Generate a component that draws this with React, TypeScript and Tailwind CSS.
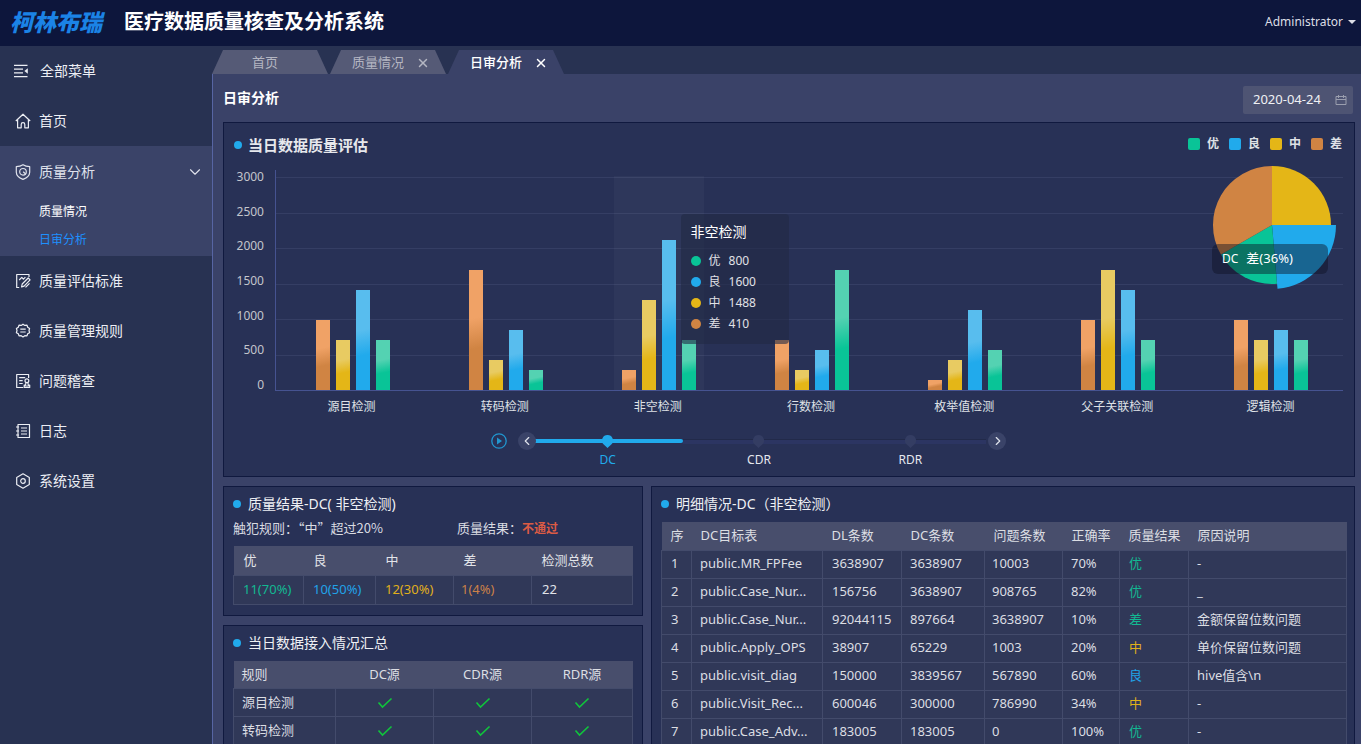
import type { ReactNode } from 'react';
import { ChevronDown, ChevronLeft, ChevronRight, X } from 'lucide-react';

type Grade = '优' | '良' | '中' | '差';

const gradeText: Record<Grade, string> = {
  优: 'text-[#12b892]',
  良: 'text-[#21a3e8]',
  中: 'text-[#e0b01c]',
  差: 'text-[#cc8148]',
};

const gradeFill: Record<Grade, string> = {
  优: 'bg-[#09c497]',
  良: 'bg-[#21aaec]',
  中: 'bg-[#e4b617]',
  差: 'bg-[#d08443]',
};

const grades: Grade[] = ['优', '良', '中', '差'];

// order of the bars inside one group: 差, 中, 良, 优
const barFills = [
  'bg-[linear-gradient(168deg,#f0a266_40%,#d08443_65%)]',
  'bg-[linear-gradient(168deg,#e8cb62_40%,#e4b617_65%)]',
  'bg-[linear-gradient(168deg,#58bdee_40%,#21aaec_65%)]',
  'bg-[linear-gradient(168deg,#54d2b2_40%,#09c497_65%)]',
];

const chartGroups = [
  { name: '源目检测', bars: [70, 50, 100, 50] },
  { name: '转码检测', bars: [120, 30, 60, 20] },
  { name: '非空检测', bars: [20, 90, 150, 50] },
  { name: '行数检测', bars: [50, 20, 40, 120] },
  { name: '枚举值检测', bars: [10, 30, 80, 40] },
  { name: '父子关联检测', bars: [70, 120, 100, 50] },
  { name: '逻辑检测', bars: [70, 50, 60, 50] },
];

const tooltipRows: [Grade, number][] = [
  ['优', 800],
  ['良', 1600],
  ['中', 1488],
  ['差', 410],
];

const detailHead = ['序', 'DC目标表', 'DL条数', 'DC条数', '问题条数', '正确率', '质量结果', '原因说明'];

const detailRows = [
  { table: 'public.MR_FPFee', dl: '3638907', dc: '3638907', bad: '10003', rate: '70%', grade: '优', color: 'text-[#12b892]', note: '-' },
  { table: 'public.Case_Nur...', dl: '156756', dc: '3638907', bad: '908765', rate: '82%', grade: '优', color: 'text-[#12b892]', note: '_' },
  { table: 'public.Case_Nur...', dl: '92044115', dc: '897664', bad: '3638907', rate: '10%', grade: '差', color: 'text-[#12b892]', note: '金额保留位数问题' },
  { table: 'public.Apply_OPS', dl: '38907', dc: '65229', bad: '1003', rate: '20%', grade: '中', color: 'text-[#e0b01c]', note: '单价保留位数问题' },
  { table: 'public.visit_diag', dl: '150000', dc: '3839567', bad: '567890', rate: '60%', grade: '良', color: 'text-[#21a3e8]', note: 'hive值含\\n' },
  { table: 'public.Visit_Rec...', dl: '600046', dc: '300000', bad: '786990', rate: '34%', grade: '中', color: 'text-[#e0b01c]', note: '-' },
  { table: 'public.Case_Adv...', dl: '183005', dc: '183005', bad: '0', rate: '100%', grade: '优', color: 'text-[#12b892]', note: '-' },
];

const Icon = ({ children }: { children: ReactNode }) => (
  <svg className="size-4 shrink-0" viewBox="0 0 16 16" fill="none" stroke="currentColor" strokeWidth={1.2} strokeLinejoin="round">
    {children}
  </svg>
);

const MenuIcon = () => (
  <Icon>
    <path d="M1 2.3h13.5M1 6.2h9M1 9.8h9M1 13.7h13.5" />
    <path d="M14.8 5.2v5.6L11.4 8z" fill="currentColor" stroke="none" />
  </Icon>
);

const HomeIcon = () => (
  <Icon>
    <path d="M.8 8 8 1.2 15.2 8M2.6 6.8v8h3.6v-3.4a1.8 1.8 0 0 1 3.6 0v3.4h3.6v-8" />
  </Icon>
);

const ShieldIcon = () => (
  <Icon>
    <path d="M8 .7c2 1.200 4.300 1.800 6.700 2v5.500c0 3.200-2.700 5.500-6.700 7.200-4-1.700-6.700-4-6.700-7.200V2.700C3.700 2.500 6 1.900 8 .7z" />
    <circle cx="8" cy="7.800" r="3.300" />
    <path d="M8.200 7.800 10.600 10" />
  </Icon>
);

const EditIcon = () => (
  <Icon>
    <path d="M14 4V1.500H1.700v13h2.500M4.200 7l2.600-2.600 1.600 1.800 2-2" />
    <path d="m6.600 14 .6-3 6-6 1.900 1.900-6 6.200zM10.500 14.300l4-4" />
  </Icon>
);

const RuleIcon = () => (
  <Icon>
    <path d="M8 1.200 9.800 2.400l2.200-.2.700 2 1.900 1.200L14 7.500l.6 2.200-1.900 1.100-.7 2-2.200-.1L8 14l-1.800-1.300-2.200.1-.7-2-1.900-1.100L2 7.500l-.6-2.100 1.900-1.200.7-2 2.200.2z" />
    <path d="M5.300 6.200h5.400M5.300 9h5.400" />
  </Icon>
);

const AuditIcon = () => (
  <Icon>
    <path d="M13.600 5V1.500H1.700v13h6.500M4.200 4.700h6M4.200 7.600h3.500M4.200 10.500h3.500" />
    <circle cx="11.900" cy="7.800" r="1.900" />
    <path d="M11 9.600 10.500 12H9.200v2.500h5.500V12h-1.400l-.5-2.400M9.200 13h5.500" />
  </Icon>
);

const LogIcon = () => (
  <Icon>
    <path d="M3 1.500h11.500v13H3zM1 4h3M1 8h3M1 12h3M6 5h6M6 8h6M6 11h6" />
  </Icon>
);

const SettingIcon = () => (
  <Icon>
    <path d="m8 .8 6.300 3.600v7.200L8 15.200l-6.300-3.600V4.400z" />
    <circle cx="8" cy="8" r="2.300" />
  </Icon>
);

const CalendarIcon = () => (
  <svg className="size-3 shrink-0 text-[#9a9eae]" viewBox="0 0 12 12" fill="none" stroke="currentColor">
    <path d="M1 2.500h10v8H1zM1 5.500h10M3.500 1v3M8.500 1v3" />
  </svg>
);

const Check = () => (
  <svg className="mx-auto h-3 w-4" viewBox="0 0 16 12" fill="none" stroke="#10c43c" strokeWidth={1.6}>
    <path d="m1.500 5.500 4 4.500 9-8.500" />
  </svg>
);

const NavItem = ({ icon, label }: { icon: ReactNode; label: string }) => (
  <a href="#" className="flex h-[50px] items-center gap-2 pl-[15px] text-sm text-[#eceef4]">
    {icon}
    {label}
  </a>
);

const Sidebar = () => (
  <nav className="w-[212px] shrink-0 bg-[#283252]">
    <a href="#" className="flex h-[50px] items-center gap-[11px] pl-[13px] text-sm text-[#eceef4]">
      <MenuIcon />
      全部菜单
    </a>
    <NavItem icon={<HomeIcon />} label="首页" />
    <div className="bg-[#3a4368] pb-[2px]">
      <button className="flex h-[52px] w-full items-center gap-2 pr-3 pl-[15px] text-sm text-[#dfe2ec]">
        <ShieldIcon />
        质量分析
        <ChevronDown className="ml-auto -mr-1 size-[18px]" strokeWidth={1.5} />
      </button>
      <a href="#" className="flex h-7 items-center pl-[39px] text-xs text-white">质量情况</a>
      <a href="#" className="flex h-7 items-center pl-[39px] text-xs text-[#1e90ff]">日审分析</a>
    </div>
    <NavItem icon={<EditIcon />} label="质量评估标准" />
    <NavItem icon={<RuleIcon />} label="质量管理规则" />
    <NavItem icon={<AuditIcon />} label="问题稽查" />
    <NavItem icon={<LogIcon />} label="日志" />
    <NavItem icon={<SettingIcon />} label="系统设置" />
  </nav>
);

const Tab = ({ label, active, closable }: { label: string; active?: boolean; closable?: boolean }) => (
  <div
    className={`flex h-6 w-[116px] items-center pt-[2px] text-[13px] [clip-path:polygon(11px_0,calc(100%-11px)_0,100%_100%,0_100%)] ${
      active ? 'bg-[#3a4268] font-medium text-white' : 'bg-[#555a76] text-[#b4b6c2]'
    } ${closable ? 'justify-between pr-4 pl-[22px]' : 'justify-center pr-[10px]'}`}
  >
    <a href="#">{label}</a>
    {closable && (
      <button aria-label={`关闭${label}`}>
        <X className="size-[14px]" strokeWidth={2.5} />
      </button>
    )}
  </div>
);

const Panel = ({ children }: { children: ReactNode }) => (
  <section className="border border-[#10193f] bg-[#283156]">{children}</section>
);

const PanelTitle = ({ children }: { children: ReactNode }) => (
  <h2 className="flex h-[34px] items-center gap-[7px] text-sm text-[#eef0f4]">
    <span className="size-2 rounded-full bg-[#21aaec]" />
    {children}
  </h2>
);

const ChartTooltip = () => (
  <div className="absolute top-[44px] left-1/2 z-10 ml-[22px] h-[130px] w-[108px] rounded bg-[#222944]/60 px-[10px] pt-2 text-white">
    <p className="mb-2 text-sm">非空检测</p>
    {tooltipRows.map(([grade, value]) => (
      <p key={grade} className="flex h-[21px] items-center text-xs text-[#e0e1e6]">
        <span className={`mr-2 size-[10px] rounded-full ${gradeFill[grade]}`} />
        <span className="mr-2">{grade}</span>
        <span>{value}</span>
      </p>
    ))}
  </div>
);

const Pie = () => (
  <div className="absolute -top-[5px] right-[6px]">
    <svg className="h-[125px] w-[125px]" viewBox="0 0 125 125">
      <path d="M60 60V1a59 59 0 0 1 59 59z" fill="#e4b617" />
      <path d="M60 60h64a64 64 0 0 1-58.500 63.800z" fill="#21aaec" />
      <path d="M60 60l5 58.800A59 59 0 0 1 8.900 89.500z" fill="#09c497" />
      <path d="M60 60 8.900 89.500A59 59 0 0 1 60 1z" fill="#d08443" />
    </svg>
    <p className="absolute top-[79px] left-0 flex h-[30px] w-[116px] items-center gap-2 rounded-md bg-[#0d1223]/45 px-[10px] text-xs text-white">
      <span>DC</span>
      <span className="text-[13px]">差(36%)</span>
    </p>
  </div>
);

const steps = ['DC', 'CDR', 'RDR'];

const Stepper = () => (
  <div className="flex items-start pt-[15px] pr-[348px] pb-2 pl-[267px]">
    <button aria-label="播放" className="mt-px mr-[11px] text-[#2196cf]">
      <svg className="size-4" viewBox="0 0 16 16" fill="none" stroke="currentColor" strokeWidth={1.300}>
        <circle cx="8" cy="8" r="7.200" />
        <path d="M6 4.500v7L11 8z" fill="currentColor" stroke="none" />
      </svg>
    </button>
    <button aria-label="上一个" className="z-10 -mr-1 flex size-[18px] items-center justify-center rounded-full bg-[#3a4368] text-[#dfe2ec]">
      <ChevronLeft className="-ml-px size-[14px]" />
    </button>
    <div className="grid flex-1 grid-cols-3">
      {steps.map((step, i) => (
        <button key={step} className={`relative flex flex-col items-center text-xs ${i === 0 ? 'text-[#21aaec]' : 'text-[#e6e8ee]'}`}>
          <span className={`absolute inset-x-0 top-[7px] ${i === 0 ? 'h-1 rounded-r-full bg-[#21aaec]' : 'h-[5px] border-t border-[#222a4a] bg-[#2c3562]'}`} />
          <svg className={`relative mt-[3px] h-[13px] w-[11px] ${i === 0 ? 'text-[#21aaec]' : 'text-[#343d63]'}`} viewBox="0 0 11 13" fill="currentColor">
            <path d="M5.500 0A5.500 5.500 0 0 1 9.800 9L5.500 13 1.200 9A5.500 5.500 0 0 1 5.500 0z" />
          </svg>
          <span className="mt-1 leading-4">{step}</span>
        </button>
      ))}
    </div>
    <button aria-label="下一个" className="ml-[2px] flex size-[18px] items-center justify-center rounded-full bg-[#3a4368] text-[#dfe2ec]">
      <ChevronRight className="ml-px size-[14px]" />
    </button>
  </div>
);

const AssessmentPanel = () => (
  <Panel>
    <div className="flex h-[46px] items-center justify-between pr-3 pb-[2px] pl-[10px]">
      <h2 className="flex items-center gap-[6px] text-[15px] font-bold text-[#e6e8ec]">
        <span className="size-2 rounded-full bg-[#21aaec]" />
        当日数据质量评估
      </h2>
      <ul className="flex gap-[10px] pb-[2px] text-xs font-bold text-[#dfe1e6]">
        {grades.map((grade) => (
          <li key={grade} className="flex items-center gap-[7px]">
            <span className={`size-3 rounded-xs ${gradeFill[grade]}`} />
            {grade}
          </li>
        ))}
      </ul>
    </div>

    <div className="flex pr-[11px]">
      <div className="flex h-[224px] w-[51px] flex-col justify-between pr-[11px] text-right text-xs leading-4 text-[#c3c5cc]">
        {[3000, 2500, 2000, 1500, 1000, 500, 0].map((tick) => (
          <span key={tick}>{tick}</span>
        ))}
      </div>
      <div className="min-w-0 flex-1 pt-px">
        <div className="relative h-[221px] border-b border-l border-[#465391]">
          <div className="absolute inset-x-0 top-[7px] bottom-0 flex flex-col">
            {[3000, 2500, 2000, 1500, 1000, 500].map((tick) => (
              <div key={tick} className="flex-1 border-t border-[#353e64]" />
            ))}
          </div>
          <div className="relative -mr-1 flex h-full">
            {chartGroups.map(({ name, bars }, i) => (
              <div key={name} className="relative flex flex-1 items-end justify-center gap-[6px]">
                {i === 2 && <div className="absolute top-[6px] bottom-0 left-1/2 w-[90px] -translate-x-1/2 bg-white/3" />}
                {bars.map((height, b) => (
                  <div key={b} className={`relative w-[14px] ${barFills[b]}`} style={{ height }} />
                ))}
                {i === 2 && <ChartTooltip />}
              </div>
            ))}
          </div>
          <Pie />
        </div>
        <div className="-mr-1 flex">
          {chartGroups.map(({ name }) => (
            <span key={name} className="flex-1 pt-[6px] text-center text-xs leading-5 text-[#dfe1e6]">{name}</span>
          ))}
        </div>
      </div>
    </div>

    <Stepper />
  </Panel>
);

const cell = 'border border-[#434b6b] font-normal';

const ResultPanel = () => (
  <Panel>
    <div className="px-[9px] pb-[10px]">
      <PanelTitle>质量结果-DC( 非空检测)</PanelTitle>
      <div className="-mt-[2px] mb-[9px] flex font-['Noto_Sans_CJK_SC',sans-serif] text-[13px] leading-[18px] text-[#d9dbe1]">
        <p className="w-[56%]">触犯规则：“中”超过20%</p>
        <p>
          质量结果：<strong className="text-xs text-[#dc5b44]">不通过</strong>
        </p>
      </div>
      <table className="w-full table-fixed border-collapse text-left text-[13px] text-[#e2e4e9]">
        <colgroup>
          <col className="w-[70px]" />
          <col className="w-[72px]" />
          <col className="w-[78px]" />
          <col className="w-[78px]" />
          <col />
        </colgroup>
        <thead className="bg-[#484e6c]">
          <tr className="h-[29px]">
            {['优', '良', '中', '差', '检测总数'].map((head) => (
              <th key={head} className="pl-[10px] font-normal">{head}</th>
            ))}
          </tr>
        </thead>
        <tbody className="bg-[#303858]">
          <tr className="h-[29px]">
            <td className={`${cell} pl-[9px] ${gradeText['优']}`}>11(70%)</td>
            <td className={`${cell} pl-[9px] ${gradeText['良']}`}>10(50%)</td>
            <td className={`${cell} pl-[9px] ${gradeText['中']}`}>12(30%)</td>
            <td className={`${cell} pl-[7px] ${gradeText['差']}`}>1(4%)</td>
            <td className={`${cell} pl-[10px]`}>22</td>
          </tr>
        </tbody>
      </table>
    </div>
  </Panel>
);

const SummaryPanel = () => (
  <Panel>
    <div className="px-[9px] pb-3">
      <PanelTitle>当日数据接入情况汇总</PanelTitle>
      <table className="mt-px w-full table-fixed border-collapse text-center text-[13px] text-[#dcdee3]">
        <colgroup>
          <col className="w-[102px]" />
          <col className="w-[98px]" />
          <col className="w-[98px]" />
          <col />
        </colgroup>
        <thead className="bg-[#484e6c]">
          <tr className="h-7">
            <th className="pl-2 text-left font-normal">规则</th>
            <th className="font-normal">DC源</th>
            <th className="font-normal">CDR源</th>
            <th className="font-normal">RDR源</th>
          </tr>
        </thead>
        <tbody className="bg-[#303858]">
          {['源目检测', '转码检测'].map((rule) => (
            <tr key={rule} className="h-7">
              <th className={`${cell} pl-2 text-left`}>{rule}</th>
              <td className={cell}><Check /></td>
              <td className={cell}><Check /></td>
              <td className={cell}><Check /></td>
            </tr>
          ))}
        </tbody>
      </table>
    </div>
  </Panel>
);

const DetailPanel = () => (
  <Panel>
    <div className="pr-[7px] pb-3 pl-[9px]">
      <PanelTitle>明细情况-DC（非空检测）</PanelTitle>
      <table className="mt-px w-full table-fixed border-collapse text-left text-[13px] text-[#dcdee3]">
        <colgroup>
          <col className="w-[30px]" />
          <col className="w-[131px]" />
          <col className="w-[79px]" />
          <col className="w-[83px]" />
          <col className="w-[78px]" />
          <col className="w-[57px]" />
          <col className="w-[69px]" />
          <col />
        </colgroup>
        <thead className="bg-[#484e6c]">
          <tr className="h-7">
            {detailHead.map((head) => (
              <th key={head} className="pl-[9px] font-normal whitespace-nowrap">{head}</th>
            ))}
          </tr>
        </thead>
        <tbody className="bg-[#303858]">
          {detailRows.map((row, i) => (
            <tr key={i} className="h-7 whitespace-nowrap">
              <td className={`${cell} pl-[9px]`}>{i + 1}</td>
              <td className={`${cell} pl-2`}>{row.table}</td>
              <td className={`${cell} pl-[9px]`}>{row.dl}</td>
              <td className={`${cell} pl-2`}>{row.dc}</td>
              <td className={`${cell} pl-[7px]`}>{row.bad}</td>
              <td className={`${cell} pl-2`}>{row.rate}</td>
              <td className={`${cell} pl-[9px] ${row.color}`}>{row.grade}</td>
              <td className={`${cell} pl-2`}>{row.note}</td>
            </tr>
          ))}
        </tbody>
      </table>
    </div>
  </Panel>
);

export default function App() {
  return (
    <div className="flex h-screen flex-col overflow-hidden bg-[#283252] font-['Noto_Sans','Noto_Sans_CJK_SC',sans-serif]">
      <header className="flex h-[46px] shrink-0 items-center bg-[#0d163c] pr-[5px] pb-[2px] pl-[10px]">
        <span className="text-[23px] font-black text-[#1b83e6] italic">柯林布瑞</span>
        <h1 className="ml-[22px] text-xl font-bold text-white">医疗数据质量核查及分析系统</h1>
        <button className="ml-auto flex items-center gap-[5px] text-xs text-[#dcdee6]">
          Administrator
          <svg className="h-1 w-2" viewBox="0 0 8 4" fill="currentColor">
            <path d="M0 0h8L4 4z" />
          </svg>
        </button>
      </header>

      <div className="flex min-h-0 flex-1">
        <Sidebar />
        <div className="flex min-w-0 flex-1 flex-col">
          <div className="flex h-7 shrink-0 items-end gap-[2px]">
            <Tab label="首页" />
            <Tab label="质量情况" closable />
            <Tab label="日审分析" active closable />
          </div>
          <main className="flex-1 overflow-y-auto border-l border-[#5765a3] bg-[#3a4268] pr-[6px] pb-2 pl-[10px] [scrollbar-width:none]">
            <div className="flex h-12 items-start justify-between pt-3 pr-[2px]">
              <h2 className="text-sm leading-6 font-bold text-white">日审分析</h2>
              <label className="flex h-7 w-[110px] items-center justify-between rounded-xs bg-[#4e5473] pr-[6px] pl-[10px]">
                <input aria-label="日期" className="w-20 bg-transparent text-[13px] text-[#f0f1f4] outline-none" defaultValue="2020-04-24" />
                <CalendarIcon />
              </label>
            </div>
            <AssessmentPanel />
            <div className="mt-[9px] grid grid-cols-[420fr_704fr] gap-2">
              <div className="flex flex-col gap-[9px]">
                <ResultPanel />
                <SummaryPanel />
              </div>
              <DetailPanel />
            </div>
          </main>
        </div>
      </div>
    </div>
  );
}
